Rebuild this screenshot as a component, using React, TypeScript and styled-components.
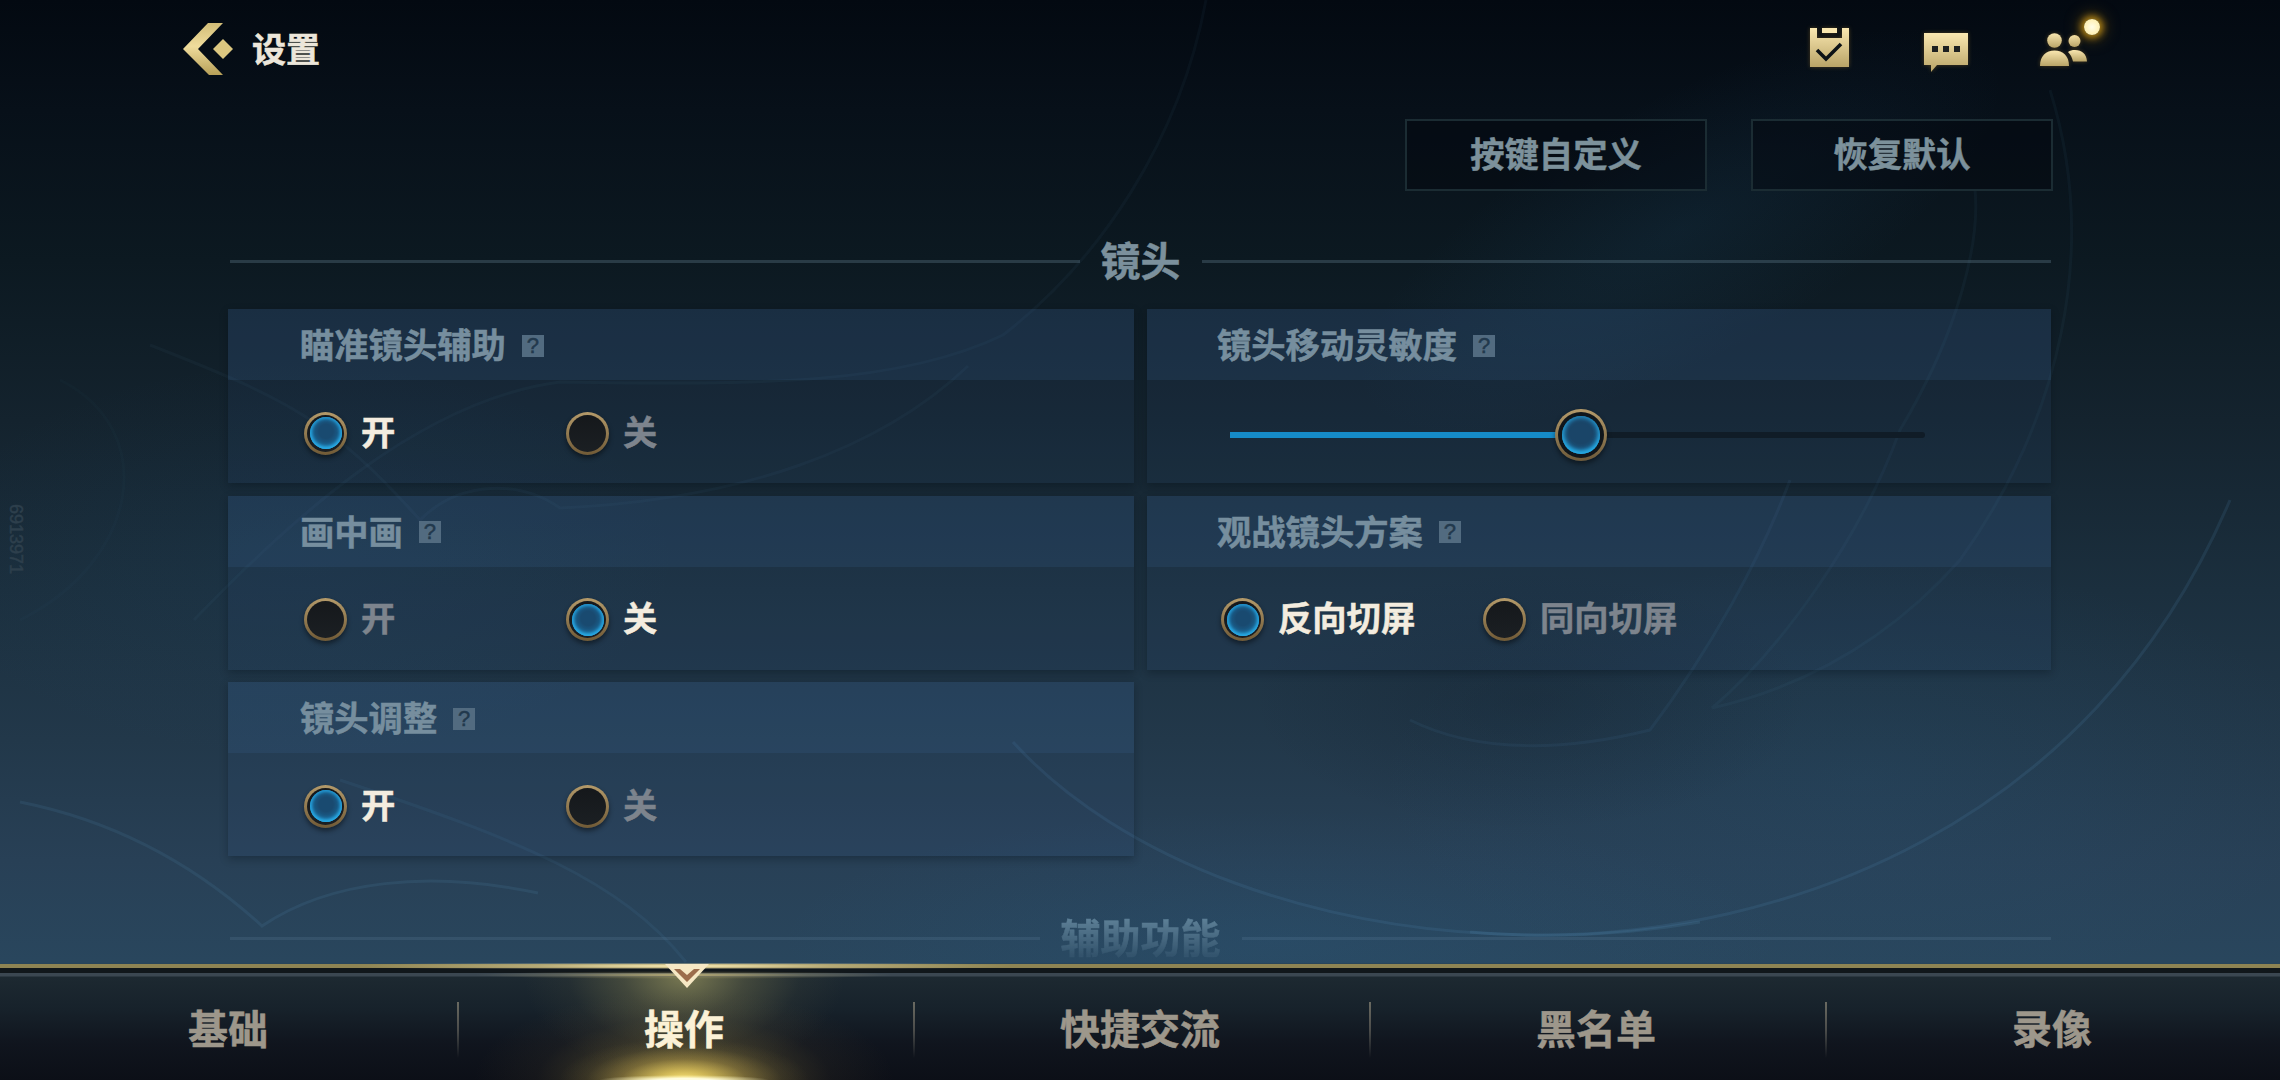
import React from "react";
import styled, { createGlobalStyle, css } from "styled-components";

type Setting = {
  title: string;
  options?: string[];
  selected?: number;
  value?: number;
};

const settings: Setting[] = [
  { title: "瞄准镜头辅助", options: ["开", "关"], selected: 0 },
  { title: "镜头移动灵敏度", value: 50.5 },
  { title: "画中画", options: ["开", "关"], selected: 1 },
  { title: "观战镜头方案", options: ["反向切屏", "同向切屏"], selected: 0 },
  { title: "镜头调整", options: ["开", "关"], selected: 0 },
];

const tabs = ["基础", "操作", "快捷交流", "黑名单", "录像"];

function Backdrop() {
  return (
    <BackdropSvg viewBox="0 0 2280 1080" fill="none">
      <defs>
        <radialGradient id="haze">
          <stop offset="0" stopColor="#2b6a98" stopOpacity="0.3" />
          <stop offset="1" stopColor="#2b6a98" stopOpacity="0" />
        </radialGradient>
        <radialGradient id="shade">
          <stop offset="0" stopColor="#0e1a26" stopOpacity="0.25" />
          <stop offset="1" stopColor="#0e1a26" stopOpacity="0" />
        </radialGradient>
      </defs>
      <ellipse cx="1680" cy="230" rx="360" ry="130" fill="url(#haze)" opacity="0.38" transform="rotate(-28 1680 230)" />
      <ellipse cx="1860" cy="780" rx="480" ry="220" fill="url(#haze)" opacity="0.4" />
      <ellipse cx="1280" cy="940" rx="500" ry="130" fill="url(#haze)" opacity="0.5" />
      <ellipse cx="300" cy="560" rx="380" ry="200" fill="url(#haze)" opacity="0.25" />
      <ellipse cx="1530" cy="700" rx="280" ry="130" fill="url(#shade)" />
      <g stroke="#5b9cc8" strokeWidth="3">
        <path d="M1013 742C1120 860 1320 935 1540 935C1780 935 2090 830 2230 500" opacity="0.13" />
        <path d="M1470 932C1540 938 1620 936 1700 922" opacity="0.14" />
        <path d="M1410 720C1480 755 1570 750 1650 730C1710 650 1760 560 1790 480" opacity="0.08" />
        <path d="M20 802C110 820 190 860 262 926C330 880 430 870 538 893" opacity="0.12" />
        <path d="M194 620C290 520 420 400 560 382C760 385 900 385 1003 335C1100 260 1180 140 1206 0" opacity="0.05" />
        <path d="M150 345C290 400 330 420 420 520C460 480 520 480 560 508C740 500 880 450 968 366" opacity="0.05" />
        <path d="M340 780C520 840 620 880 686 962" opacity="0.09" />
        <path d="M2050 90C2100 250 2060 420 1960 560C1880 650 1790 690 1712 708C1780 650 1860 540 1900 430C1960 330 1980 240 1975 190" opacity="0.055" />
        <path d="M60 380C160 430 140 560 20 620" opacity="0.025" />
      </g>
    </BackdropSvg>
  );
}

function IconGradient({ id }: { id: string }) {
  return (
    <linearGradient id={id} x1="0" y1="0" x2="0" y2="1">
      <stop offset="0" stopColor="#f9e7b0" />
      <stop offset="1" stopColor="#b9a467" />
    </linearGradient>
  );
}

function BackIcon() {
  return (
    <svg width="50" height="52" viewBox="0 0 50 52">
      <defs>
        <linearGradient id="back" x1="0" y1="0" x2="0" y2="1">
          <stop offset="0" stopColor="#d2bd78" />
          <stop offset="0.45" stopColor="#efdc9c" />
          <stop offset="1" stopColor="#b7a058" />
        </linearGradient>
      </defs>
      <path d="M25 0H40L15 26L40 52H26L0 26Z" fill="url(#back)" />
      <path d="M40 16L50 26L40 36L30 26Z" fill="#dcc780" />
    </svg>
  );
}

function TaskIcon() {
  return (
    <svg width="39" height="39" viewBox="0 0 39 39">
      <defs>
        <IconGradient id="task" />
      </defs>
      <path d="M0 0H7V10H32V0H39V39H0Z" fill="url(#task)" />
      <path d="M12 0H27V5H12Z" fill="#f9e7b0" />
      <path d="M7 22L16 31L31 16" fill="none" stroke="#0d1316" strokeWidth="3.6" />
    </svg>
  );
}

function ChatIcon() {
  return (
    <svg width="44" height="39" viewBox="0 0 44 39">
      <defs>
        <IconGradient id="chat" />
      </defs>
      <path d="M0 0H44V32H13L7 39V32H0Z" fill="url(#chat)" />
      <path d="M8 13H14V19H8ZM19 13H25V19H19ZM30 13H36V19H30Z" fill="#1d2021" />
    </svg>
  );
}

function FriendsIcon() {
  return (
    <svg width="47" height="33" viewBox="0 0 47 33">
      <defs>
        <IconGradient id="friends" />
      </defs>
      <g fill="url(#friends)">
        <circle cx="14.5" cy="7.5" r="7.3" />
        <path d="M0 33C0 23 6 17.5 14.5 17.5C23 17.5 29 23 29 33Z" />
        <circle cx="34.5" cy="8" r="6" />
        <path d="M28 19C30 17.5 32 17 35 17C42 17 46.5 21 47 28.5H33C32 24 30.5 21.5 28 19Z" />
      </g>
    </svg>
  );
}

function MarkerIcon() {
  return (
    <Marker viewBox="0 0 44 26">
      <path d="M0 1H44L22 25Z" fill="#f6e8c4" />
      <path d="M9 6H15L22 12L29 6H35L22 19Z" fill="#9c6d4b" />
    </Marker>
  );
}

function SettingCard({ setting }: { setting: Setting }) {
  return (
    <Card>
      <CardHeader>
        {setting.title}
        <Help>?</Help>
      </CardHeader>
      {setting.options ? (
        <Options>
          {setting.options.map((option, i) => (
            <Option key={option} $active={i === setting.selected}>
              <Radio $active={i === setting.selected} />
              <OptionText>{option}</OptionText>
            </Option>
          ))}
        </Options>
      ) : (
        <SliderBody>
          <Track>
            <Fill style={{ width: `${setting.value}%` }} />
            <Thumb style={{ left: `${setting.value}%` }} />
          </Track>
        </SliderBody>
      )}
    </Card>
  );
}

function App() {
  return (
    <Page>
      <GlobalStyle />
      <Backdrop />
      <Header>
        <BackIcon />
        <Title>设置</Title>
        <HeaderIcons>
          <TaskIcon />
          <ChatIcon />
          <FriendsWrap>
            <FriendsIcon />
            <Dot />
          </FriendsWrap>
        </HeaderIcons>
      </Header>

      <Actions>
        <ActionButton>按键自定义</ActionButton>
        <ActionButton>恢复默认</ActionButton>
      </Actions>

      <Content>
        <SectionTitle>镜头</SectionTitle>
        <Grid>
          {settings.map((setting) => (
            <SettingCard key={setting.title} setting={setting} />
          ))}
        </Grid>
        <SectionTitle $faded>
          <FadedText>辅助功能</FadedText>
        </SectionTitle>
      </Content>

      <TabBar>
        {tabs.map((tab) => (
          <Tab key={tab} $active={tab === "操作"}>
            {tab === "操作" && <MarkerIcon />}
            <TabLabel>{tab}</TabLabel>
          </Tab>
        ))}
      </TabBar>
      <Serial>6913971</Serial>
    </Page>
  );
}

export default App;

const GlobalStyle = createGlobalStyle`
  * {
    box-sizing: border-box;
  }

  body {
    margin: 0;
    background: #040c14;
  }
`;

const Page = styled.div`
  position: relative;
  display: flex;
  flex-direction: column;
  width: 2280px;
  height: 1080px;
  overflow: hidden;
  font-family: "Noto Sans CJK SC", "Liberation Sans", sans-serif;
  font-weight: 700;
  -webkit-text-stroke: 0.5px currentColor;
  background: linear-gradient(
    #030911 0,
    #071019 110px,
    #0c1921 260px,
    #14232e 420px,
    #1b2f3e 590px,
    #22384a 740px,
    #284056 860px,
    #29465d 960px
  );
`;

const BackdropSvg = styled.svg`
  position: absolute;
  inset: 0;
  width: 2280px;
  height: 1080px;
`;

const Header = styled.header`
  position: relative;
  display: flex;
  align-items: center;
  height: 98px;
  padding: 0 193px 0 183px;
`;

const Title = styled.h1`
  margin: 0 0 2px 19px;
  font-size: 34px;
  line-height: 50px;
  color: #ece6da;
`;

const HeaderIcons = styled.div`
  display: flex;
  align-items: center;
  gap: 72px;
  margin-left: auto;

  svg {
    display: block;
    filter: drop-shadow(0 0 2px rgba(200, 150, 50, 0.35));
  }

  > svg:nth-child(1) {
    margin: -3px 1px 0 0;
  }

  > svg:nth-child(2) {
    margin: 6px 0 0 2px;
  }
`;

const FriendsWrap = styled.div`
  position: relative;
`;

const Dot = styled.span`
  position: absolute;
  top: -14px;
  right: -13px;
  width: 16px;
  height: 16px;
  border-radius: 50%;
  background: radial-gradient(#fffde8, #ffeb9a);
  box-shadow: 0 0 7px 3px rgba(222, 164, 24, 0.75), 0 0 16px 5px rgba(190, 130, 10, 0.35);
`;

const Actions = styled.div`
  position: relative;
  display: flex;
  justify-content: flex-end;
  gap: 44px;
  margin: 21px 227px 0 0;
`;

const ActionButton = styled.button`
  width: 302px;
  height: 72px;
  padding: 0 0 6px;
  border: 2px solid #1b2c33;
  background: rgba(2, 6, 12, 0.4);
  font: inherit;
  font-size: 34.3px;
  -webkit-text-stroke: inherit;
  color: #7c919b;
`;

const Content = styled.main`
  position: relative;
  flex: 1;
  min-height: 0;
  padding: 44px 229px 0 228px;
`;

const SectionTitle = styled.h2<{ $faded?: boolean }>`
  display: flex;
  align-items: center;
  gap: 21px;
  height: 48px;
  margin: 0 0 26px 2px;
  font-size: 40px;
  line-height: 48px;
  color: #7b909c;

  &::before,
  &::after {
    content: "";
    flex: 1;
    height: 3px;
    margin-top: 4px;
    background: rgba(110, 140, 155, 0.3);
  }

  ${({ $faded }) =>
    $faded &&
    css`
      margin-top: 56px;
      margin-bottom: 0;
      color: #5d7f96;

      &::before,
      &::after {
        background: rgba(110, 150, 180, 0.17);
      }
    `}
`;

/* dissolves towards the tab bar */
const FadedText = styled.span`
  mask-image: linear-gradient(#000 15%, rgba(0, 0, 0, 0.2) 90%);
`;

const Grid = styled.div`
  display: grid;
  grid-template-columns: 906px 904px;
  grid-auto-rows: 174px;
  gap: 12.7px 13px;
`;

const Card = styled.section`
  display: flex;
  flex-direction: column;
  background: rgba(60, 100, 160, 0.1);
  box-shadow: 0 3px 8px rgba(4, 12, 20, 0.3);
`;

const CardHeader = styled.h3`
  display: flex;
  align-items: center;
  height: 71px;
  margin: 0;
  padding: 0 72px 3px 72px;
  font-size: 34.3px;
  line-height: 50px;
  color: #768e9e;
  background: rgba(64, 116, 165, 0.15);

  ${Card}:nth-child(even) & {
    padding-left: 70px;
  }
`;

const Help = styled.span`
  display: flex;
  align-items: center;
  justify-content: center;
  width: 22px;
  height: 22px;
  margin: 5px 0 0 16px;
  font: 400 22px/22px "Liberation Sans", sans-serif;
  color: #22394d;
  background: #526b80;
`;

const Options = styled.div`
  display: flex;
  padding: 31px 0 0 76px;

  ${Card}:nth-child(even) & {
    padding-left: 74px;
  }
`;

const Option = styled.label<{ $active: boolean }>`
  display: flex;
  align-items: center;
  gap: 14px;
  width: 262px;
  height: 44px;
  font-size: 34.3px;
  line-height: 44px;
  white-space: nowrap;
  color: ${({ $active }) => ($active ? "#f3ecdf" : "#7d848d")};
`;

const OptionText = styled.span`
  margin-bottom: 7px;
`;

const knob = css`
  border: 3px solid transparent;
  border-radius: 50%;
  box-shadow: 0 3px 5px rgba(0, 0, 0, 0.45);
`;

const Radio = styled.span<{ $active: boolean }>`
  ${knob}
  position: relative;
  flex: none;
  width: 43px;
  height: 43px;
  background: linear-gradient(#15181b, #1b1f23) padding-box,
    linear-gradient(#b49a6a, #705a36) border-box;

  &::after {
    content: "";
    position: absolute;
    inset: 2.5px;
    border-radius: 50%;
    display: ${({ $active }) => ($active ? "block" : "none")};
    background: radial-gradient(circle at 50% 45%, #194a70 30%, #1b6c9e 75%);
    box-shadow: inset 0 -2px 4px #2bb0ea, inset 0 0 3px 2px #2192cc;
  }
`;

const SliderBody = styled.div`
  padding: 52px 126px 0 83px;
`;

const Track = styled.div`
  position: relative;
  height: 6px;
  border-radius: 0 3px 3px 0;
  background: #101c27;
`;

const Fill = styled.div`
  height: 6px;
  background: #168bc8;
`;

const Thumb = styled.span`
  ${knob}
  position: absolute;
  top: 50%;
  width: 52px;
  height: 52px;
  transform: translate(-50%, -50%);
  background: linear-gradient(#10161b, #10161b) padding-box,
    linear-gradient(#b49a6a, #6d5a3a) border-box;

  &::after {
    content: "";
    position: absolute;
    inset: 4px;
    border-radius: 50%;
    background: radial-gradient(circle at 50% 42%, #1a4568 40%, #1c5f8c 75%);
    box-shadow: inset 0 -3px 4px #25aee8, inset 0 0 4px 2px #2387bb;
  }
`;

const TabBar = styled.nav`
  position: relative;
  display: flex;
  height: 117px;
  padding-top: 14px;
  background: radial-gradient(ellipse 330px 5px at 684px 3px, #fff0b8, rgba(255, 240, 184, 0.35) 45%, transparent) top / 100% 6px no-repeat,
    radial-gradient(ellipse 210px 4px at 684px 12px, rgba(225, 205, 130, 0.8), rgba(225, 205, 130, 0.2) 60%, transparent),
    linear-gradient(
      #29455a 0,
      #29455a 1px,
      #8e8453 1px,
      #8e8453 5px,
      #11171b 5px,
      #11171b 10px,
      #3b4751 10px,
      #3b4751 13px,
      #1d2931 14px,
      #17222b 45px,
      #10151e 80px,
      #0c0f17 117px
    );
`;

const Tab = styled.div<{ $active: boolean }>`
  position: relative;
  display: flex;
  flex: 1;
  align-items: center;
  justify-content: center;
  color: ${({ $active }) => ($active ? "#fbf1d6" : "#9d978b")};

  ${({ $active }) =>
    $active &&
    css`
      background: radial-gradient(ellipse 85px 5px at 50% 100%, #fffde0 30%, rgba(255, 250, 200, 0.5) 65%, transparent),
        radial-gradient(
          ellipse 125px 42px at 50% 100%,
          #ffe878,
          rgba(250, 220, 100, 0.7) 22%,
          rgba(230, 195, 85, 0.3) 50%,
          rgba(200, 170, 75, 0.08) 78%,
          transparent
        ),
        radial-gradient(
          ellipse 210px 90px at 50% 100%,
          rgba(190, 165, 75, 0.55),
          rgba(150, 130, 65, 0.3) 38%,
          rgba(120, 100, 60, 0.09) 70%,
          transparent
        ),
        radial-gradient(
          ellipse 160px 100px at 50% 0,
          rgba(150, 146, 92, 0.75),
          rgba(130, 125, 80, 0.38) 38%,
          rgba(110, 105, 70, 0.1) 72%,
          transparent
        );
    `}

  &:not(:first-child)::before {
    content: "";
    position: absolute;
    left: 1px;
    top: 25px;
    width: 2px;
    height: 56px;
    background: linear-gradient(#6a6a61, #4b4c4a 50%, transparent);
  }
`;

const TabLabel = styled.span`
  margin-bottom: 4px;
  font-size: 40px;
  line-height: 58px;
`;

const Marker = styled.svg`
  position: absolute;
  top: -14px;
  left: 209px;
  width: 44px;
  height: 26px;
`;

const Serial = styled.span`
  position: absolute;
  left: 6px;
  top: 504px;
  font: 400 18px/20px "Liberation Sans", sans-serif;
  writing-mode: vertical-rl;
  color: #2d3f4c;
`;
